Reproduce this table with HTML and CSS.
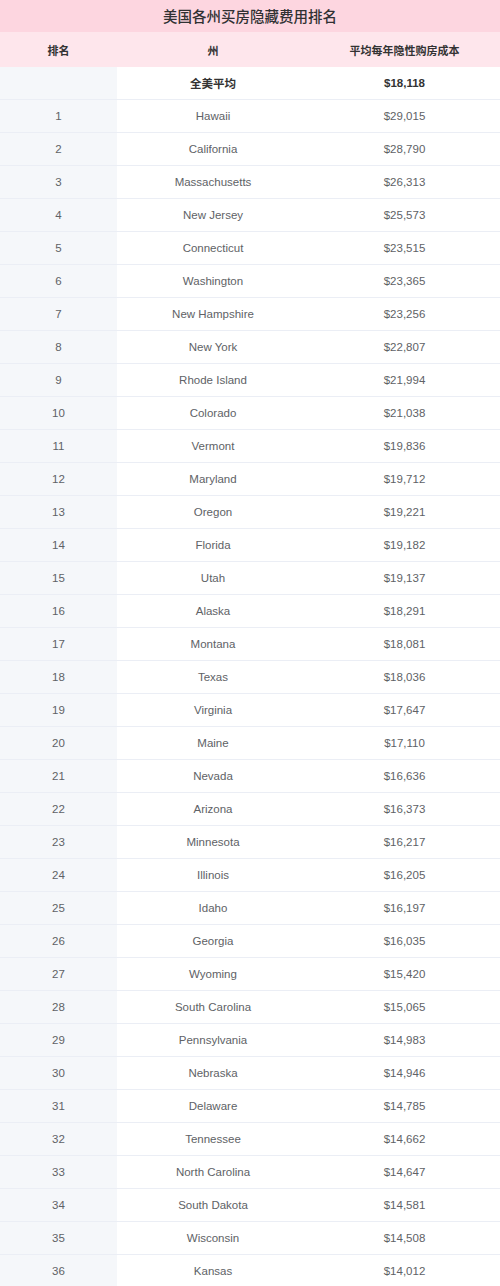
FILE: index.html
```html
<!DOCTYPE html>
<html lang="zh-CN">
<head>
<meta charset="utf-8">
<title>美国各州买房隐藏费用排名</title>
<link rel="stylesheet" href="styles.css">
</head>
<body>
<div class="wrap">
  <div class="title">美国各州买房隐藏费用排名</div>
  <table class="rank">
    <colgroup><col class="c1"><col class="c2"><col class="c3"></colgroup>
    <thead>
      <tr><th>排名</th><th>州</th><th>平均每年隐性购房成本</th></tr>
    </thead>
    <tbody>
      <tr class="avg"><td></td><td>全美平均</td><td>$18,118</td></tr>
      <tr><td>1</td><td>Hawaii</td><td>$29,015</td></tr>
      <tr><td>2</td><td>California</td><td>$28,790</td></tr>
      <tr><td>3</td><td>Massachusetts</td><td>$26,313</td></tr>
      <tr><td>4</td><td>New Jersey</td><td>$25,573</td></tr>
      <tr><td>5</td><td>Connecticut</td><td>$23,515</td></tr>
      <tr><td>6</td><td>Washington</td><td>$23,365</td></tr>
      <tr><td>7</td><td>New Hampshire</td><td>$23,256</td></tr>
      <tr><td>8</td><td>New York</td><td>$22,807</td></tr>
      <tr><td>9</td><td>Rhode Island</td><td>$21,994</td></tr>
      <tr><td>10</td><td>Colorado</td><td>$21,038</td></tr>
      <tr><td>11</td><td>Vermont</td><td>$19,836</td></tr>
      <tr><td>12</td><td>Maryland</td><td>$19,712</td></tr>
      <tr><td>13</td><td>Oregon</td><td>$19,221</td></tr>
      <tr><td>14</td><td>Florida</td><td>$19,182</td></tr>
      <tr><td>15</td><td>Utah</td><td>$19,137</td></tr>
      <tr><td>16</td><td>Alaska</td><td>$18,291</td></tr>
      <tr><td>17</td><td>Montana</td><td>$18,081</td></tr>
      <tr><td>18</td><td>Texas</td><td>$18,036</td></tr>
      <tr><td>19</td><td>Virginia</td><td>$17,647</td></tr>
      <tr><td>20</td><td>Maine</td><td>$17,110</td></tr>
      <tr><td>21</td><td>Nevada</td><td>$16,636</td></tr>
      <tr><td>22</td><td>Arizona</td><td>$16,373</td></tr>
      <tr><td>23</td><td>Minnesota</td><td>$16,217</td></tr>
      <tr><td>24</td><td>Illinois</td><td>$16,205</td></tr>
      <tr><td>25</td><td>Idaho</td><td>$16,197</td></tr>
      <tr><td>26</td><td>Georgia</td><td>$16,035</td></tr>
      <tr><td>27</td><td>Wyoming</td><td>$15,420</td></tr>
      <tr><td>28</td><td>South Carolina</td><td>$15,065</td></tr>
      <tr><td>29</td><td>Pennsylvania</td><td>$14,983</td></tr>
      <tr><td>30</td><td>Nebraska</td><td>$14,946</td></tr>
      <tr><td>31</td><td>Delaware</td><td>$14,785</td></tr>
      <tr><td>32</td><td>Tennessee</td><td>$14,662</td></tr>
      <tr><td>33</td><td>North Carolina</td><td>$14,647</td></tr>
      <tr><td>34</td><td>South Dakota</td><td>$14,581</td></tr>
      <tr><td>35</td><td>Wisconsin</td><td>$14,508</td></tr>
      <tr><td>36</td><td>Kansas</td><td>$14,012</td></tr>
    </tbody>
  </table>
</div>
</body>
</html>
```

FILE: styles.css
```css
html, body {
  margin: 0;
  padding: 0;
  background: #ffffff;
}
body {
  font-family: "Liberation Sans", Arial, "Noto Sans CJK SC", sans-serif;
  color: #606266;
}
.wrap {
  width: 500px;
}
.title {
  height: 32px;
  line-height: 32px;
  background: #fdd6e0;
  color: #303133;
  font-family: "Noto Sans CJK SC", sans-serif;
  font-size: 14.5px;
  font-weight: 500;
  text-align: center;
}
.rank {
  width: 500px;
  border-collapse: collapse;
  table-layout: fixed;
}
.c1 { width: 117px; }
.c2 { width: 192px; }
.c3 { width: 191px; }
.rank th {
  height: 35px;
  padding: 0;
  background: #fee6ec;
  color: #333333;
  font-family: "Noto Sans CJK SC", sans-serif;
  font-size: 11px;
  font-weight: bold;
  text-align: center;
}
.rank td {
  height: 32px;
  padding: 0;
  border-bottom: 1px solid #ebeef5;
  font-size: 11.5px;
  text-align: center;
  color: #606266;
}
.rank td:first-child {
  background: #f5f7fa;
}
.rank tr.avg td {
  font-weight: bold;
  color: #333333;
  font-family: "Noto Sans CJK SC", "Liberation Sans", sans-serif;
}
.rank tr.avg td:last-child {
  font-family: "Liberation Sans", Arial, sans-serif;
}
```
